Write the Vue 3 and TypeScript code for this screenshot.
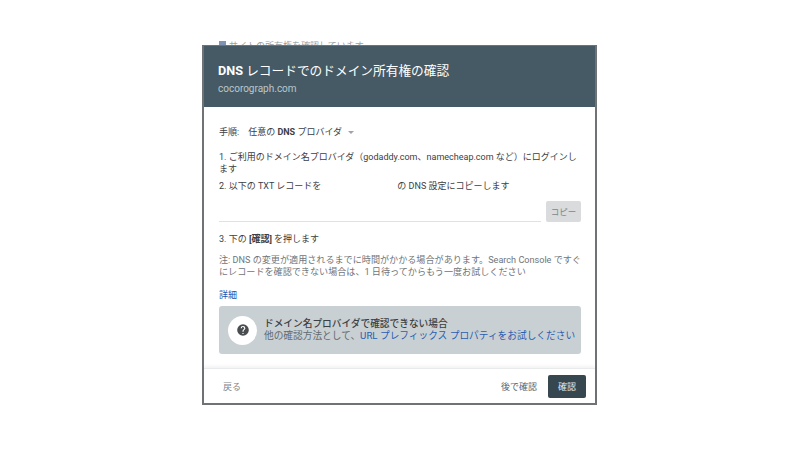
<script setup lang="ts">
const title = 'レコードでのドメイン所有権の確認'
</script>

<template>
  <div class="page">
    <div class="behind"><i class="mark"></i>サイトの所有権を確認しています。</div>
    <section class="dialog">
      <header class="head">
        <h1><b>DNS</b> {{ title }}</h1>
        <p>cocorograph.com</p>
      </header>
      <main class="body">
        <div class="method">
          <span>手順:</span>
          <span class="pick">任意の <b>DNS</b> プロバイダ</span>
          <i class="caret"></i>
        </div>
        <p class="step s1">1. ご利用のドメイン名プロバイダ（godaddy.com、namecheap.com など）にログインし<br />ます</p>
        <p class="step s2">2. 以下の TXT レコードを<span class="blank"></span>の DNS 設定にコピーします</p>
        <div class="copyrow">
          <div class="field"></div>
          <button class="copy">コピー</button>
        </div>
        <p class="step s3">3. 下の <b>[確認]</b> を押します</p>
        <p class="note">注: DNS の変更が適用されるまでに時間がかかる場合があります。Search Console ですぐ<br />にレコードを確認できない場合は、1 日待ってからもう一度お試しください</p>
        <a class="more">詳細</a>
        <div class="help">
          <div class="disc">
            <svg width="14" height="14" viewBox="0 0 24 24"><path fill="#4a4d50" d="M12 2a10 10 0 1 0 0 20 10 10 0 0 0 0-20zm1 17h-2v-2h2v2zm2.07-7.75-.9.92C13.45 12.9 13 13.5 13 15h-2v-.5c0-1.1.45-2.1 1.17-2.83l1.24-1.26A2 2 0 1 0 10 9H8a4 4 0 1 1 8 0c0 .88-.36 1.68-.93 2.25z"/></svg>
          </div>
          <div class="helptext">
            <strong>ドメイン名プロバイダで確認できない場合</strong>
            <span>他の確認方法として、<a>URL プレフィックス プロパティをお試しください</a></span>
          </div>
        </div>
      </main>
      <footer class="foot">
        <button class="ghost">戻る</button>
        <div class="right">
          <button class="ghost">後で確認</button>
          <button class="primary">確認</button>
        </div>
      </footer>
    </section>
  </div>
</template>

<style>
body { background: #fff; }
</style>

<style scoped>
.page {
  position: relative;
  width: 800px;
  height: 450px;
  overflow: hidden;
  background: #fff;
  padding-top: 45px;
  box-sizing: border-box;
  font-family: Roboto, "Noto Sans CJK JP", sans-serif;
  color: #3c4043;
}
.behind {
  position: absolute;
  left: 219px;
  top: 41px;
  white-space: nowrap;
  font-size: 9px;
  line-height: 10px;
  color: #9aa0a6;
}
.mark {
  display: inline-block;
  width: 7px;
  height: 8px;
  margin-right: 3px;
  background: #7f93b5;
}
.dialog {
  position: relative;
  width: 395px;
  height: 360px;
  margin-left: 202px;
  box-sizing: border-box;
  border: 2px solid #6f7376;
  border-top-width: 1.5px;
  background: #fff;
  display: flex;
  flex-direction: column;
}
.head {
  height: 61px;
  background: #455a64;
  padding: 16px 14px 0;
  box-sizing: border-box;
  color: #fff;
}
.head h1 {
  margin: 0;
  font-size: 12.7px;
  line-height: 18px;
  font-weight: 400;
}
.head h1 b { font-weight: 700; }
.head p {
  margin: 2px 0 0;
  font-size: 10px;
  line-height: 13px;
  color: #bcc6cb;
}
.body {
  flex: 1;
  padding: 18px 14px 0 15px;
  font-size: 9px;
  line-height: 12px;
}
.method {
  display: flex;
  align-items: center;
  height: 14px;
}
.pick { margin-left: 9px; }
.pick b { font-weight: 700; }
.caret {
  margin-left: 6px;
  border-left: 3px solid transparent;
  border-right: 3px solid transparent;
  border-top: 3px solid #a0a4a8;
}
.step { margin: 0; }
.s1 { margin-top: 12px; white-space: nowrap; }
.s2 { margin-top: 5px; }
.blank { display: inline-block; width: 76px; }
.copyrow {
  display: flex;
  justify-content: space-between;
  align-items: flex-end;
  margin-top: 8px;
  height: 22px;
}
.field {
  width: 322px;
  border-bottom: 1px solid #dfe1e3;
}
.copy {
  width: 35px;
  height: 21px;
  border: 0;
  border-radius: 2px;
  padding: 0;
  background: #d9dbdc;
  color: #80868b;
  font: inherit;
  font-size: 8.5px;
}
.s3 { margin-top: 11px; }
.s3 b { font-weight: 700; }
.note {
  margin: 9px 0 0;
  font-size: 9.1px;
  line-height: 12px;
  color: #70757a;
  white-space: nowrap;
}
.more {
  display: block;
  margin-top: 11px;
  color: #1a56b0;
  line-height: 12px;
}
.help {
  margin-top: 5px;
  height: 48px;
  display: flex;
  align-items: center;
  padding-left: 9px;
  background: #c9d0d3;
  border-radius: 3px;
}
.disc {
  width: 29px;
  height: 29px;
  border-radius: 50%;
  background: #fff;
  display: flex;
  align-items: center;
  justify-content: center;
}
.helptext {
  margin-left: 7px;
  display: flex;
  flex-direction: column;
  font-size: 9.7px;
  line-height: 12px;
}
.helptext strong { font-weight: 500; color: #3c4043; }
.helptext span { color: #5f6b72; white-space: nowrap; }
.helptext a { color: #2a5db0; }
.foot {
  height: 34px;
  flex: none;
  display: flex;
  align-items: center;
  justify-content: space-between;
  padding: 0 9px 0 13px;
  border-top: 1px solid #e8eaeb;
  box-shadow: 0 -2px 3px rgba(0, 0, 0, 0.05);
}
.right {
  display: flex;
  align-items: center;
  gap: 11px;
}
button { cursor: pointer; }
.ghost {
  border: 0;
  background: none;
  padding: 0 6px;
  font: inherit;
  font-size: 9px;
  color: #80868b;
}
.right .ghost { padding: 0; color: #5f6368; }
.primary {
  width: 38px;
  height: 23px;
  border: 0;
  border-radius: 2px;
  padding: 0;
  background: #37474f;
  color: #e4e8ea;
  font: inherit;
  font-size: 9px;
}
</style>
